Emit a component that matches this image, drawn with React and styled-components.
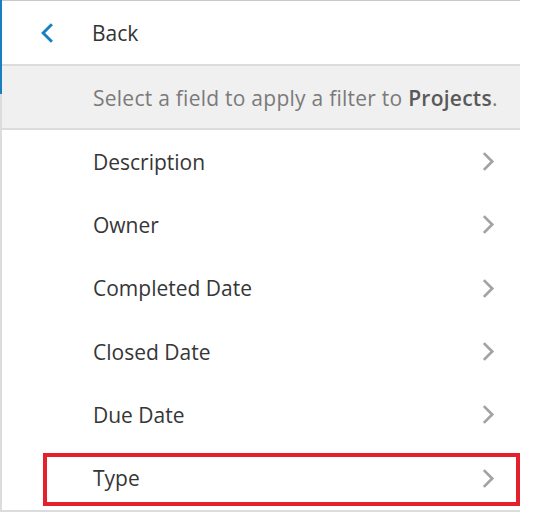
import React from "react";
import styled, { createGlobalStyle } from "styled-components";

const GlobalStyle = createGlobalStyle`
  body {
    margin: 0;
    background: #fff;
    font-family: "Open Sans", "Noto Sans", sans-serif;
  }
`;

const Panel = styled.div`
  position: relative;
  width: 518px;
  border-left: 2px solid #dcdcdc;
  border-top: 1px solid #c8c8c8;
  background: #fff;

  &::before {
    content: "";
    position: absolute;
    left: -2px;
    top: -1px;
    width: 2px;
    height: 94px;
    background: #1a7fc1;
  }
`;

const BackRow = styled.div`
  display: flex;
  align-items: center;
  height: 63px;
  padding-left: 38px;
  gap: 38px;
  color: #333;
  font-size: 21px;
`;

const Hint = styled.div`
  display: flex;
  align-items: center;
  height: 60px;
  padding: 2px 0 0 91px;
  background: #f0f0f0;
  border-top: 2px solid #dcdcdc;
  border-bottom: 2px solid #dcdcdc;
  color: #7a7a7a;
  font-size: 21px;
  letter-spacing: 0.25px;
  white-space: pre;

  strong {
    color: #595959;
    font-weight: 600;
  }
`;

const List = styled.div`
  display: flex;
  flex-direction: column;
  border-bottom: 2px solid #dcdcdc;
`;

const Row = styled.div`
  position: relative;
  display: flex;
  align-items: center;
  justify-content: space-between;
  height: 63.3px;
  padding: 0 25px 0 91px;
  color: #363636;
  font-size: 21px;

  &::after {
    content: "";
    display: ${(p) => (p.$highlighted ? "block" : "none")};
    position: absolute;
    left: 41px;
    right: 0;
    top: 7px;
    bottom: 4px;
    border: 4px solid #e3202b;
  }
`;

const Chevron = ({ dir = "right", color = "#a3a3a3", width = 13, height = 19 }) => (
  <svg width={width} height={height} viewBox="0 0 12 18" fill="none">
    <path
      d={dir === "right" ? "M2.5 2 L9.5 9 L2.5 16" : "M9.5 2 L2.5 9 L9.5 16"}
      stroke={color}
      strokeWidth="2.6"
      strokeLinecap="square"
    />
  </svg>
);

const fields = ["Description", "Owner", "Completed Date", "Closed Date", "Due Date", "Type"];

export default function App() {
  return (
    <>
      <GlobalStyle />
      <Panel>
        <BackRow>
          <Chevron dir="left" color="#1a7fc1" width={14} height={20} />
          <span>Back</span>
        </BackRow>
        <Hint>
          Select a field to apply a filter to <strong>Projects</strong>.
        </Hint>
        <List>
          {fields.map((f) => (
            <Row key={f} $highlighted={f === "Type"}>
              <span>{f}</span>
              <Chevron />
            </Row>
          ))}
        </List>
      </Panel>
    </>
  );
}
